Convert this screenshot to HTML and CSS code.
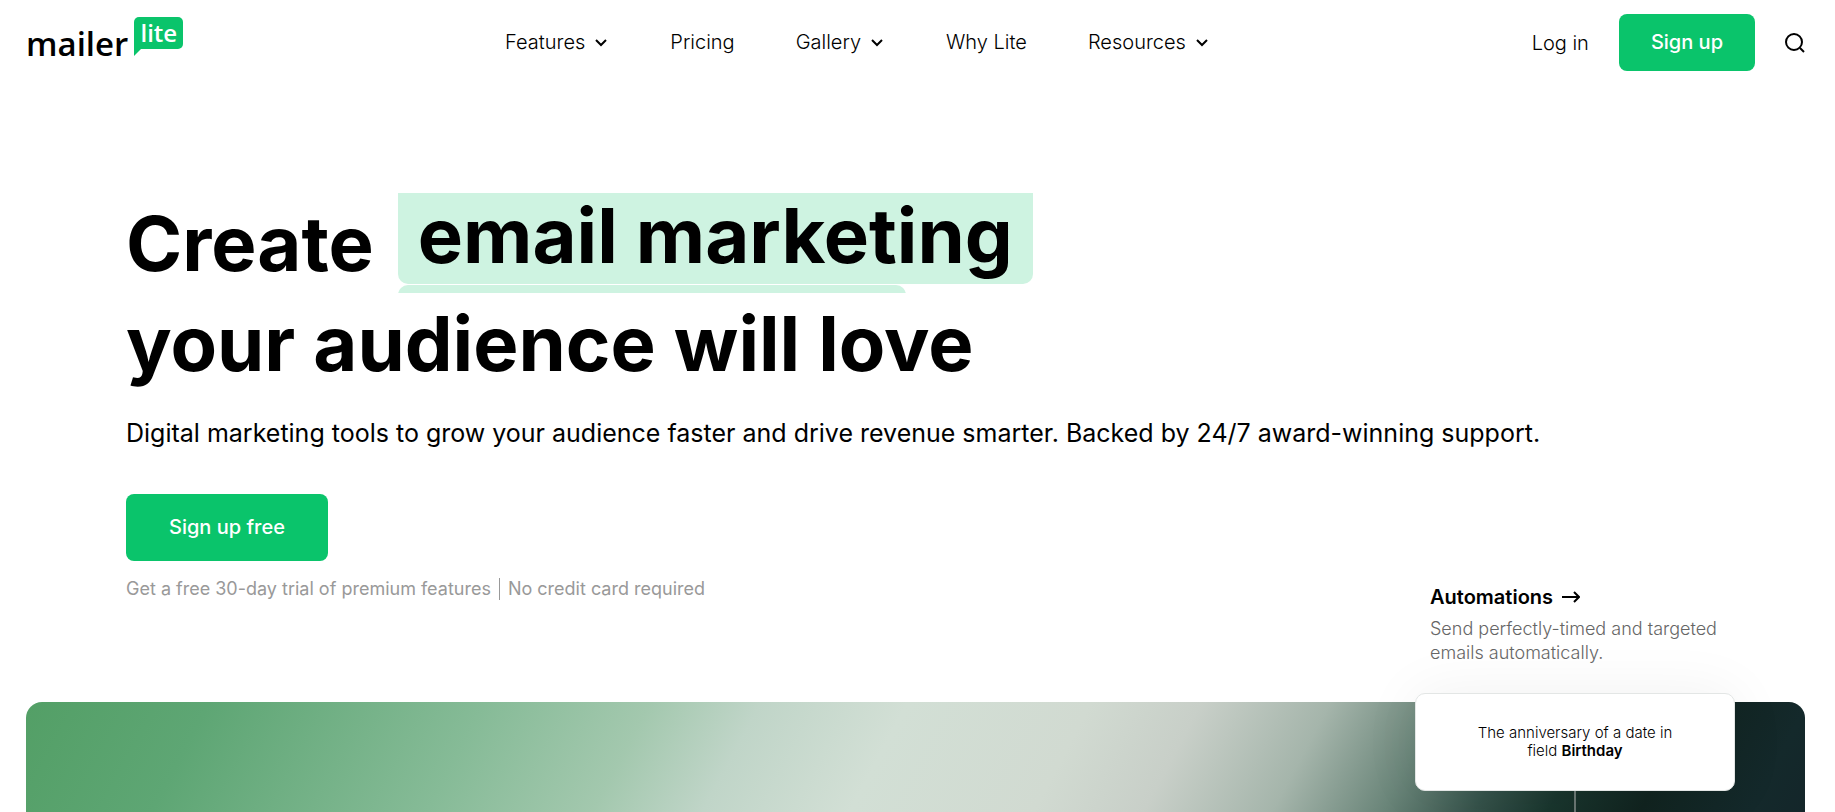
FILE: index.html
```html
<!DOCTYPE html>
<html lang="en">
<head>
    <meta charset="UTF-8">
    <meta name="viewport" content="width=device-width, initial-scale=1.0">
    <title>Create email marketing your audience will love - MailerLite</title>
    <link rel="stylesheet" href="styles.css">
</head>
<body>
    <header class="header">
        <a class="logo" href="#">
            <span class="logo-name">mailer</span>
            <span class="logo-bubble">lite</span>
        </a>

        <nav class="nav">
            <button class="nav-item" type="button">Features
                <svg class="chevron" viewBox="0 0 16 16"><path d="M3 6l5 5 5-5"/></svg>
            </button>
            <a class="nav-item" href="#">Pricing</a>
            <button class="nav-item" type="button">Gallery
                <svg class="chevron" viewBox="0 0 16 16"><path d="M3 6l5 5 5-5"/></svg>
            </button>
            <a class="nav-item" href="#">Why Lite</a>
            <button class="nav-item" type="button">Resources
                <svg class="chevron" viewBox="0 0 16 16"><path d="M3 6l5 5 5-5"/></svg>
            </button>
        </nav>

        <div class="account">
            <a class="nav-item" href="#">Log in</a>
            <a class="btn" href="#">Sign up</a>
            <button class="search" type="button" aria-label="Search">
                <svg viewBox="0 0 20 20"><circle cx="9" cy="9" r="8"/><path d="M15 15l4 4"/></svg>
            </button>
        </div>
    </header>

    <main class="main">
        <section class="hero">
            <h1 class="title">
                <span class="title-row">Create
                    <span class="rotator">
                        <span class="word">email marketing</span>
                        <span class="word word-next"></span>
                    </span>
                </span>
                <span class="title-row">your audience will love</span>
            </h1>
            <p class="lead">Digital marketing tools to grow your audience faster and drive revenue smarter. Backed by 24/7 award-winning support.</p>
            <a class="btn btn-large" href="#">Sign up free</a>
            <p class="note"><span>Get a free 30-day trial of premium features</span><span class="note-part">No credit card required</span></p>
        </section>

        <section class="showcase">
            <div class="automation">
                <a class="automation-title" href="#">Automations
                    <svg class="arrow" viewBox="0 0 18 12"><path d="M0 6h17M12 1l5 5-5 5"/></svg>
                </a>
                <p class="automation-text">Send perfectly-timed and targeted emails automatically.</p>
                <div class="step">The anniversary of a date in field <strong>Birthday</strong></div>
                <div class="step-line"></div>
            </div>
        </section>
    </main>
</body>
</html>
```
FILE: styles.css
```css
* {
    box-sizing: border-box;
}

body {
    margin: 0;
    min-height: 100vh;
    display: flex;
    flex-direction: column;
    font-family: Inter, sans-serif;
    font-size: 20px;
    font-weight: 300;
    color: #000;
    background: #fff;
}

a {
    color: inherit;
    text-decoration: none;
}

button {
    padding: 0;
    border: 0;
    background: none;
    font: inherit;
    color: inherit;
    cursor: pointer;
}

svg {
    fill: none;
    stroke: currentColor;
    stroke-width: 2;
}

/* Header */
.header {
    display: flex;
    align-items: center;
    justify-content: space-between;
    padding: 14px 30px 0 26px;
}

.logo {
    display: flex;
    gap: 6px;
    padding-bottom: 6px;
    font-family: "Open Sans", sans-serif;
}

.logo-name {
    padding-top: 8px;
    font-size: 33px;
    font-weight: 600;
    line-height: 38px;
}

.logo-bubble {
    position: relative;
    align-self: flex-start;
    width: 49px;
    height: 32px;
    border-radius: 5px;
    background: #0ac46b;
    color: #fff;
    font-size: 24px;
    font-weight: 600;
    line-height: 32px;
    text-align: center;
}

.logo-bubble::after {
    content: "";
    position: absolute;
    left: 0;
    top: 27px;
    border-top: 12px solid #0ac46b;
    border-right: 12px solid transparent;
}

.nav {
    display: flex;
    gap: 61px;
    padding-bottom: 2px;
}

.nav-item {
    display: flex;
    align-items: center;
    gap: 8px;
}

.chevron {
    width: 16px;
    height: 16px;
}

.account {
    display: flex;
    align-items: center;
    gap: 30px;
}

.btn {
    display: inline-block;
    padding: 0 32px;
    border-radius: 8px;
    background: #0ac46b;
    color: #fff;
    font-weight: 500;
    line-height: 57px;
}

.btn-large {
    padding: 0 43px;
    line-height: 67px;
}

.search {
    display: flex;
    width: 20px;
    height: 20px;
}

/* Hero */
.hero {
    padding: 122px 126px 0;
}

.title {
    margin: 0;
    font-size: 76px;
    font-weight: 700;
    line-height: 100px;
}

.title-row {
    display: flex;
    align-items: flex-start;
    gap: 24px;
}

.rotator {
    height: 100px;
    overflow: hidden;
}

.word {
    display: block;
    height: 91px;
    padding: 0 20px;
    border-radius: 0 0 10px 10px;
    background: #cef3e1;
    line-height: 84px;
}

.word-next {
    width: 80%;
    margin-top: 1px;
    border-radius: 10px 10px 0 0;
}

.lead {
    margin: 21px 0 42px;
    font-size: 25px;
    font-weight: 400;
    line-height: 38px;
}

.note {
    display: flex;
    margin: 17px 0 0;
    color: #999;
    font-size: 18px;
    font-weight: 400;
    line-height: 22px;
}

.note-part {
    margin-left: 8px;
    padding-left: 8px;
    border-left: 1px solid #999;
}

/* Showcase */
.main {
    flex: 1;
    display: flex;
    flex-direction: column;
}

.showcase {
    position: relative;
    flex: 1;
    min-height: 110px;
    margin: 102px 30px 0 26px;
    border-radius: 16px 16px 0 0;
    background: linear-gradient(118deg, #539f66 0%, #5ea674 10%, #86bb97 25%, #a3c8ae 34%, #c0d5c8 40%, #d2dfd5 48%, #d1dad1 58%, #c8cfc8 64%, #a5b5ab 71%, #6a8579 77%, #35524a 82%, #19352d 86%, #11231f 91%, #14292b 97%, #14262a 100%);
}

/* The automation block hangs over the top edge of the panel */
.automation {
    position: absolute;
    top: -118px;
    right: 70px;
    width: 320px;
}

.automation-title {
    display: flex;
    align-items: center;
    gap: 9px;
    padding-left: 15px;
    font-weight: 600;
    line-height: 26px;
}

.arrow {
    width: 18px;
    height: 12px;
}

.automation-text {
    margin: 7px 0 28px;
    padding-left: 15px;
    color: #666;
    font-size: 18px;
    line-height: 24px;
}

.step {
    padding: 30px 55px;
    border: 1px solid #e3e6e5;
    border-radius: 10px;
    background: #fff;
    box-shadow: 0 0 60px rgba(0, 0, 0, 0.06);
    font-size: 15px;
    line-height: 18px;
    text-align: center;
}

.step strong {
    font-weight: 600;
}

.step-line {
    width: 2px;
    height: 21px;
    margin: 0 auto;
    background: #66736f;
}
```
